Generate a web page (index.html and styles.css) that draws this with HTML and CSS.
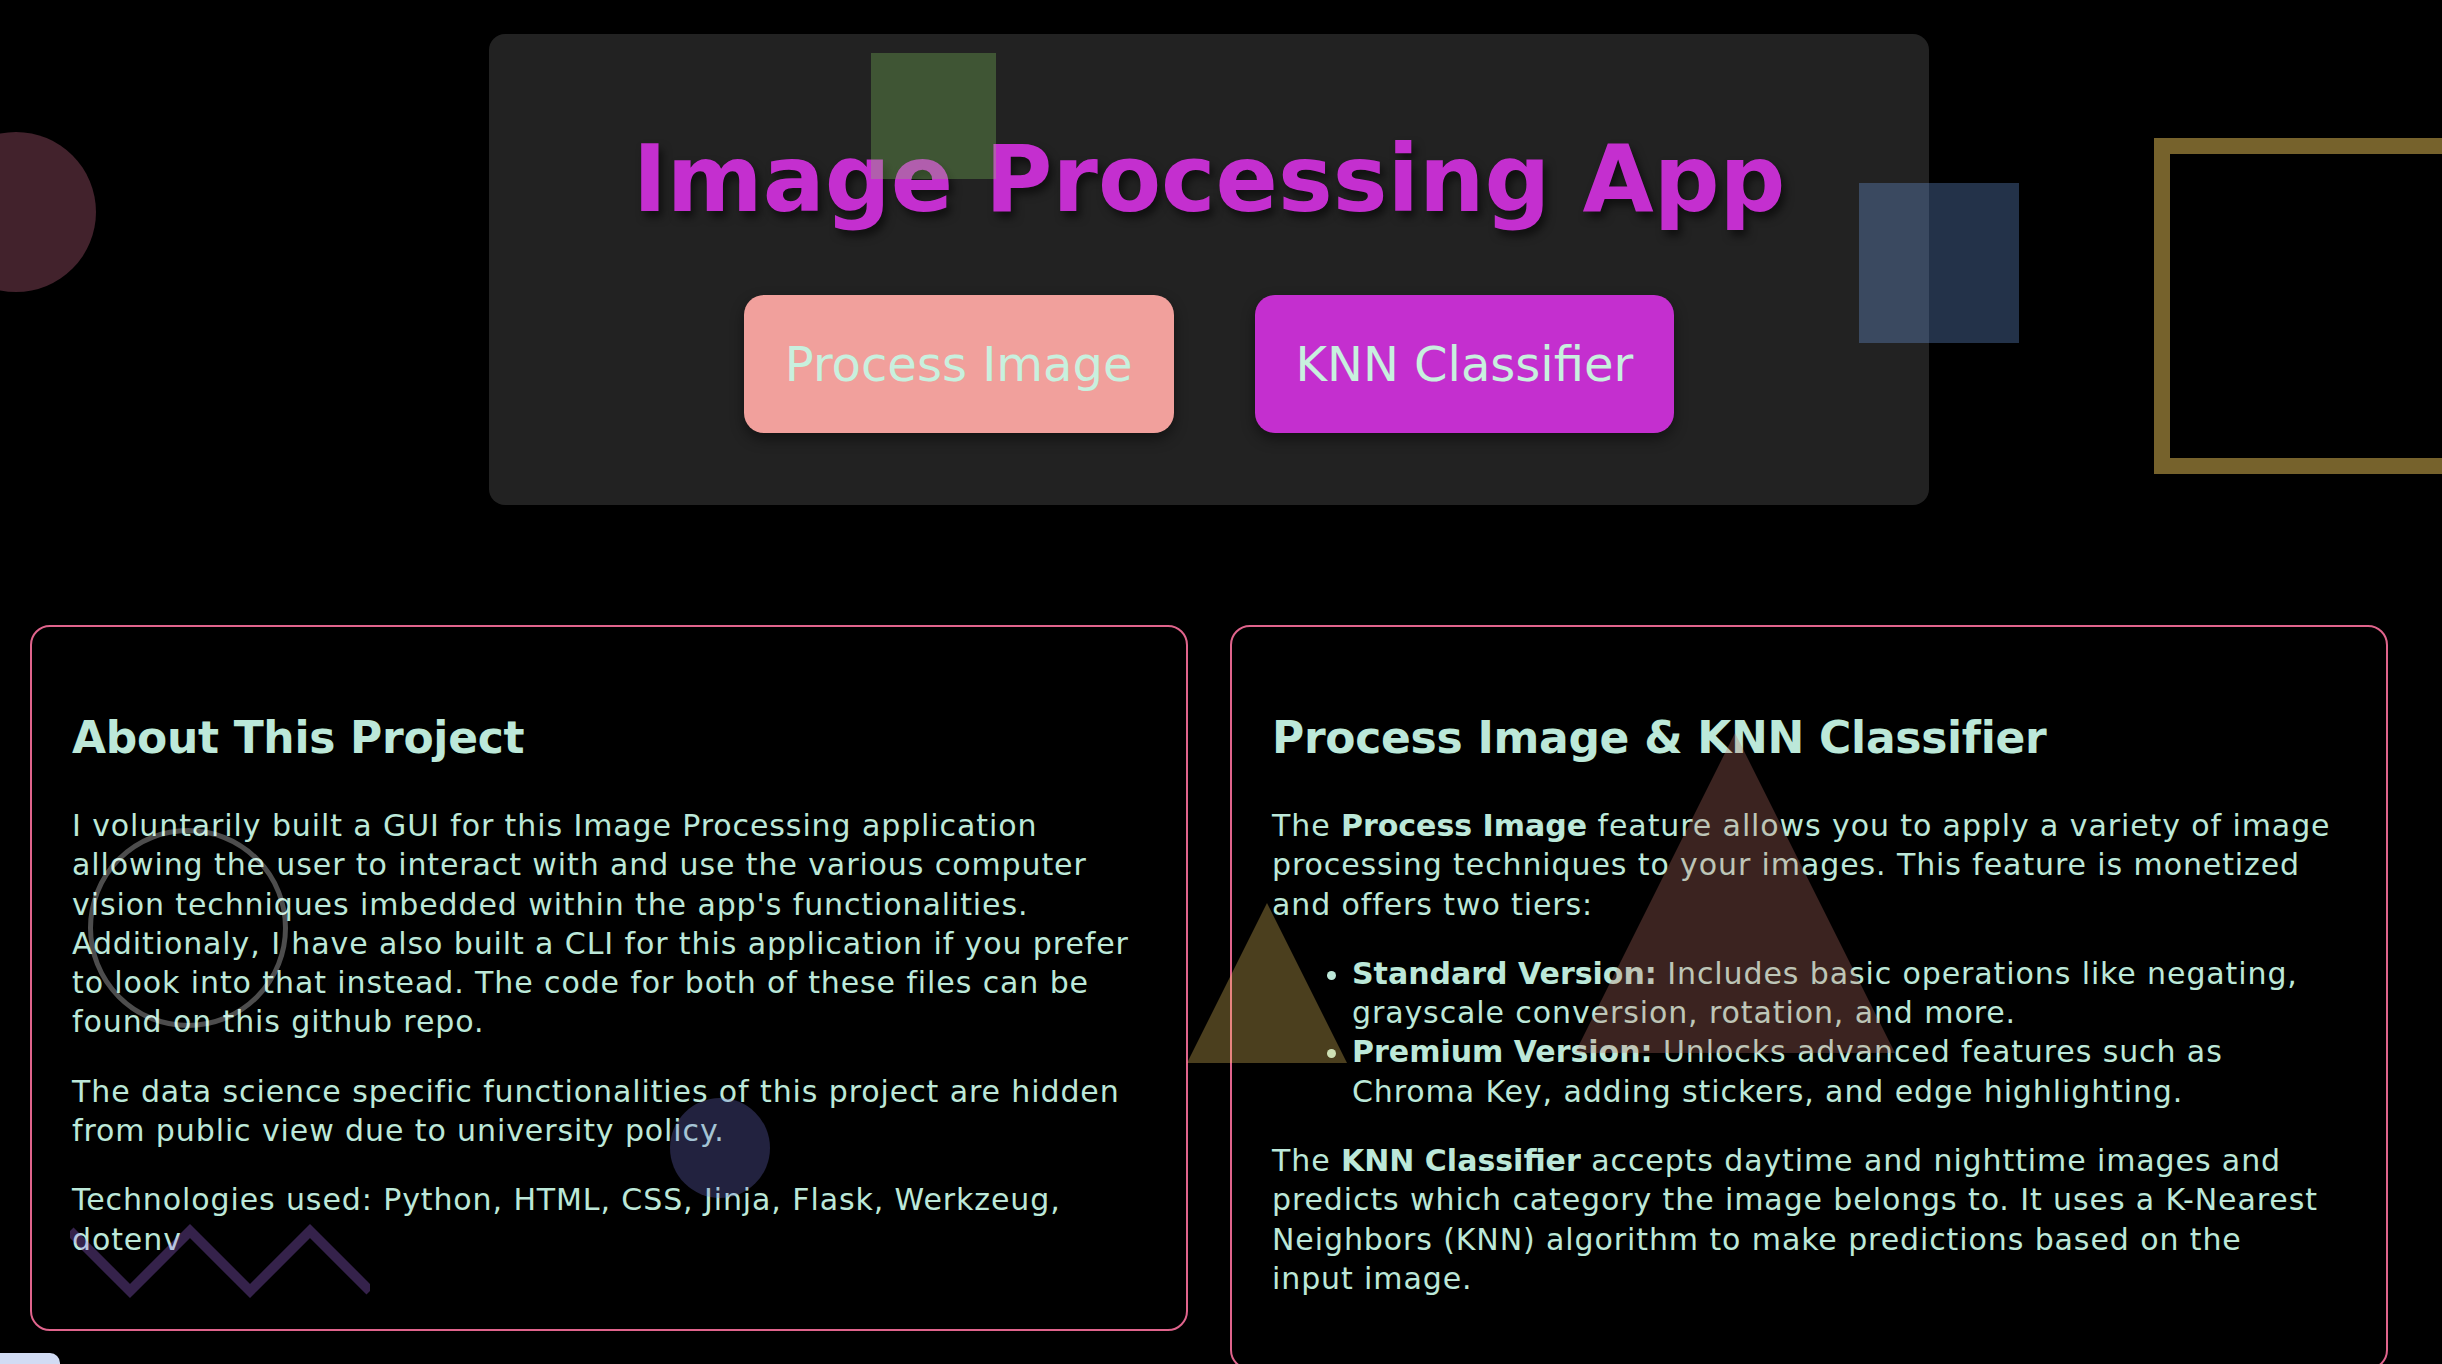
FILE: index.html
```html
<!DOCTYPE html>
<html lang="en">
<head>
<meta charset="utf-8">
<title>Image Processing App</title>
<link rel="stylesheet" href="styles.css">
</head>
<body>
<div class="page">
  <header class="hero">
    <h1 class="hero-title">Image Processing App</h1>
    <nav class="hero-actions">
      <a class="btn btn-process" href="#">Process Image</a>
      <a class="btn btn-knn" href="#">KNN Classifier</a>
    </nav>
  </header>

  <main class="cards">
    <section class="card">
      <h2 class="card-title">About This Project</h2>
      <p>I voluntarily built a GUI for this Image Processing application allowing the user to interact with and use the various computer vision techniques imbedded within the app's functionalities. Additionaly, I have also built a CLI for this application if you prefer to look into that instead. The code for both of these files can be found on this github repo.</p>
      <p>The data science specific functionalities of this project are hidden from public view due to university policy.</p>
      <p>Technologies used: Python, HTML, CSS, Jinja, Flask, Werkzeug, dotenv</p>
    </section>

    <section class="card">
      <h2 class="card-title">Process Image &amp; KNN Classifier</h2>
      <p>The <strong>Process Image</strong> feature allows you to apply a variety of image processing techniques to your images. This feature is monetized and offers two tiers:</p>
      <ul>
        <li><strong>Standard Version:</strong> Includes basic operations like negating, grayscale conversion, rotation, and more.</li>
        <li><strong>Premium Version:</strong> Unlocks advanced features such as Chroma Key, adding stickers, and edge highlighting.</li>
      </ul>
      <p class="card-text-narrow">The <strong>KNN Classifier</strong> accepts daytime and nighttime images and predicts which category the image belongs to. It uses a K-Nearest Neighbors (KNN) algorithm to make predictions based on the input image.</p>
    </section>
  </main>
</div>

<div class="shapes" aria-hidden="true">
  <span class="shape circle-red"></span>
  <span class="shape square-green"></span>
  <span class="shape square-blue"></span>
  <span class="shape square-gold"></span>
  <span class="shape ring-gray"></span>
  <span class="shape circle-navy"></span>
  <span class="shape triangle-gold"></span>
  <span class="shape triangle-brown"></span>
  <svg class="shape zigzag" width="300" height="82" viewBox="0 0 300 82">
    <polyline points="0,11 60,71 120,11 180,71 240,11 300,71" fill="none" stroke="rgba(177,113,247,0.3)" stroke-width="10" stroke-linejoin="miter"/>
  </svg>
</div>

<button class="corner-tab" type="button" aria-label="menu"></button>
</body>
</html>
```

FILE: styles.css
```css
html, body {
  margin: 0;
  padding: 0;
  background: #000;
}

html {
  overflow: hidden;
}

body {
  position: relative;
  min-height: 1364px;
  font-family: "DejaVu Sans", "Verdana", sans-serif;
  color: #bce8d9;
}

.page {
  padding-right: 24px;
}

/* ---------- hero ---------- */
.hero {
  width: 1440px;
  box-sizing: border-box;
  margin: 34px auto 0;
  padding: 91px 0 72px;
  background: #222222;
  border-radius: 16px;
  text-align: center;
}

.hero-title {
  margin: 0;
  font-size: 92px;
  line-height: 110px;
  font-weight: 700;
  color: #c42fcf;
  text-shadow: 4px 6px 8px rgba(0, 0, 0, 0.55);
}

.hero-actions {
  display: flex;
  justify-content: center;
  gap: 81px;
  margin-top: 60px;
}

.btn {
  display: block;
  padding: 40px 41px;
  font-size: 48px;
  line-height: 58px;
  border-radius: 20px;
  color: #c8f0de;
  text-decoration: none;
  box-shadow: 0 6px 14px rgba(0, 0, 0, 0.45);
}

.btn-process {
  background: #f1a09c;
}

.btn-knn {
  background: #c42fcf;
}

/* ---------- cards ---------- */
.cards {
  display: flex;
  align-items: flex-start;
  gap: 42px;
  padding: 0 30px;
  margin-top: 120px;
}

.card {
  flex: 1 1 0;
  border: 2px solid #e0648c;
  border-radius: 20px;
  padding: 40px 44px 40px 40px;
}

.card-title {
  margin: 42px 0 40px;
  font-size: 44px;
  line-height: 57px;
  font-weight: 700;
  letter-spacing: -0.3px;
}

.card p,
.card ul {
  margin: 0 0 30px;
  font-size: 30px;
  line-height: 39.3px;
  letter-spacing: 0.9px;
}

.card ul {
  padding-left: 80px;
}

.card .card-text-narrow {
  padding-right: 18px;
}

.card strong {
  font-weight: 700;
  letter-spacing: 0;
}

/* ---------- decorative shapes ---------- */
.shapes {
  position: absolute;
  top: 0;
  left: 0;
  width: 100%;
  height: 1364px;
  overflow: hidden;
  pointer-events: none;
}

.shape {
  position: absolute;
  display: block;
}

.circle-red {
  left: -64px;
  top: 132px;
  width: 160px;
  height: 160px;
  border-radius: 50%;
  background: rgba(220, 113, 147, 0.3);
}

.square-green {
  left: 871px;
  top: 53px;
  width: 125px;
  height: 126px;
  background: rgba(134, 204, 97, 0.3);
}

.square-blue {
  left: 1859px;
  top: 183px;
  width: 160px;
  height: 160px;
  background: rgba(117, 167, 243, 0.3);
}

.square-gold {
  left: 2154px;
  top: 138px;
  width: 304px;
  height: 304px;
  border: 16px solid rgba(236, 196, 88, 0.5);
}

.ring-gray {
  left: 88px;
  top: 828px;
  width: 190px;
  height: 190px;
  border: 5px solid rgba(255, 255, 255, 0.3);
  border-radius: 50%;
}

.circle-navy {
  left: 670px;
  top: 1098px;
  width: 100px;
  height: 100px;
  border-radius: 50%;
  background: rgba(113, 113, 210, 0.3);
}

.triangle-gold {
  left: 1187px;
  top: 903px;
  width: 160px;
  height: 160px;
  background: rgba(247, 207, 100, 0.3);
  clip-path: polygon(50% 0, 100% 100%, 0 100%);
}

.triangle-brown {
  left: 1575px;
  top: 733px;
  width: 320px;
  height: 320px;
  background: rgba(197, 117, 107, 0.3);
  clip-path: polygon(50% 0, 100% 100%, 0 100%);
}

.zigzag {
  left: 70px;
  top: 1220px;
}

.corner-tab {
  position: absolute;
  left: -10px;
  top: 1353px;
  width: 70px;
  height: 40px;
  border: 0;
  padding: 0;
  border-radius: 10px;
  background: #d2dcf4;
}
```
